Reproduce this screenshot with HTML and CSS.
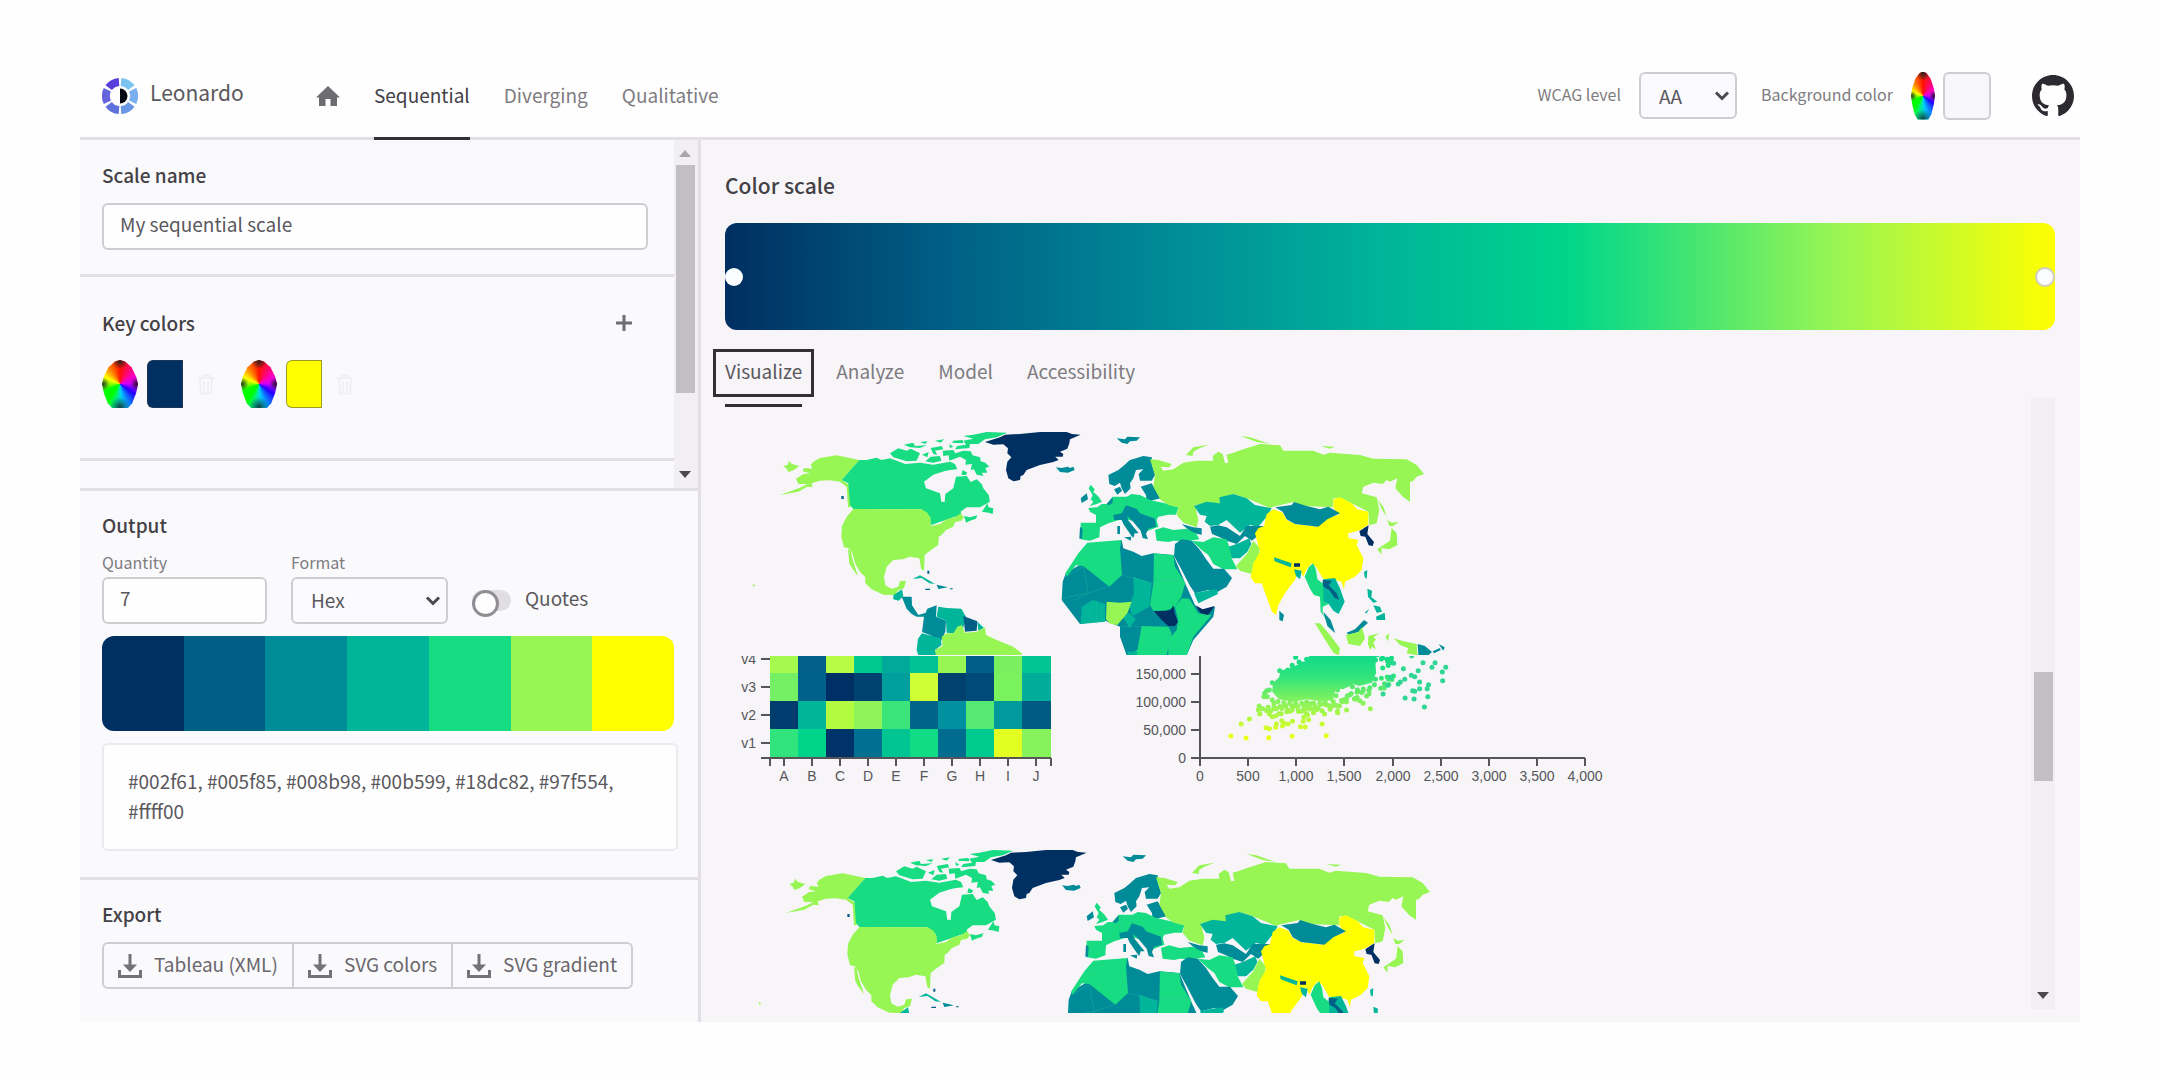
FILE: index.html
```html
<!DOCTYPE html>
<html lang="en">
<head>
<meta charset="utf-8">
<meta name="viewport" content="width=device-width, initial-scale=1">
<title>Leonardo - Sequential</title>
<link rel="stylesheet" href="styles.css">
</head>
<body>
<svg width="0" height="0" class="sprite" aria-hidden="true">
  <symbol id="chevron" viewBox="0 0 16 12"><path d="M2 2.500l6 6 6-6" fill="none" stroke="currentColor" stroke-width="3"/></symbol>
  <symbol id="download" viewBox="0 0 24 24"><path d="M12 0v14M1.500 16v6.500h21V16" fill="none" stroke="currentColor" stroke-width="3"/><path d="M5 10.500h14L12 18z" fill="currentColor"/></symbol>
  <symbol id="trash" viewBox="0 0 18 21"><path d="M1 4h16M6 4V1.500h6V4M3 4l1 15.500h10L15 4M7 7v10M11 7v10" fill="none" stroke="currentColor" stroke-width="2"/></symbol>
</svg>
<div class="app">
  <header class="header">
    <a class="brand" href="#">
      <svg class="logo" viewBox="0 0 36 36" aria-hidden="true">
        <g fill="none" stroke-width="8">
          <path d="M19 4A14 14 0 0 1 29.300 9.700" stroke="#7cc4f0"/>
          <path d="M30.600 11.700A14 14 0 0 1 30.600 24.300" stroke="#7ab0f0"/>
          <path d="M29.300 26.300A14 14 0 0 1 19 32" stroke="#6a96e6"/>
          <path d="M17 32A14 14 0 0 1 6.700 26.300" stroke="#5f72dc"/>
          <path d="M5.400 24.300A14 14 0 0 1 5.400 11.700" stroke="#6465dc"/>
          <path d="M6.700 9.700A14 14 0 0 1 17 4" stroke="#5a3edc"/>
        </g>
        <path d="M18 10.500a7.500 7.500 0 0 1 0 15z" fill="#050510"/>
      </svg>
      <span>Leonardo</span>
    </a>
    <nav class="nav">
      <a class="home" href="#" aria-label="Home"><svg viewBox="0 0 24 20" aria-hidden="true"><path d="M12 0L24 11.500H21V20H14.500V13H9.500V20H3V11.500H0z" fill="#6e6c70"/></svg></a>
      <a class="nav-link active" href="#">Sequential</a>
      <a class="nav-link" href="#">Diverging</a>
      <a class="nav-link" href="#">Qualitative</a>
    </nav>
    <div class="tools">
      <label class="small" for="wcag">WCAG level</label>
      <div class="select wcag"><select id="wcag"><option>AA</option><option>AAA</option></select><svg aria-hidden="true"><use href="#chevron"/></svg></div>
      <label class="small" for="bg">Background color</label>
      <span class="wheel narrow"></span>
      <input class="swatch wide" id="bg" type="color" value="#f8f8fa">
      <a class="github" href="#" aria-label="GitHub"><svg viewBox="0 0 16 16" aria-hidden="true"><path fill="#2c2a30" d="M8 0C3.580 0 0 3.580 0 8c0 3.540 2.290 6.530 5.470 7.590.4.070.55-.17.55-.38 0-.19-.01-.82-.01-1.490-2.010.37-2.530-.49-2.690-.94-.09-.23-.48-.94-.82-1.130-.28-.15-.68-.52-.01-.53.63-.01 1.080.58 1.230.82.72 1.210 1.870.87 2.330.66.070-.52.280-.87.510-1.070-1.780-.2-3.640-.89-3.640-3.950 0-.87.310-1.590.82-2.150-.08-.2-.36-1.020.08-2.120 0 0 .67-.21 2.200.82.64-.18 1.320-.27 2-.27s1.360.09 2 .27c1.530-1.040 2.200-.82 2.200-.82.44 1.100.16 1.920.08 2.120.51.56.82 1.270.82 2.150 0 3.070-1.870 3.750-3.650 3.950.29.25.54.73.54 1.480 0 1.070-.01 1.930-.01 2.200 0 .21.150.46.55.38A8.010 8.010 0 0 0 16 8c0-4.420-3.580-8-8-8z"/></svg></a>
    </div>
  </header>
  <div class="columns">
    <aside class="sidebar">
      <div class="scroll">
        <div class="scroll-body">
          <section class="block name-block">
            <h2><label for="scale-name">Scale name</label></h2>
            <input class="field" id="scale-name" type="text" value="My sequential scale">
          </section>
          <section class="block keys-block">
            <div class="title-row"><h2>Key colors</h2><button class="add" aria-label="Add color"><svg viewBox="0 0 16 16" aria-hidden="true"><path d="M8 0v16M0 8h16" stroke="#6e6c70" stroke-width="3"/></svg></button></div>
            <div class="keys">
              <div class="key"><span class="wheel"></span><input class="swatch" type="color" value="#002f61" aria-label="Key color 1"><button class="remove" aria-label="Remove color 1" disabled><svg aria-hidden="true"><use href="#trash"/></svg></button></div>
              <div class="key"><span class="wheel"></span><input class="swatch" type="color" value="#ffff00" aria-label="Key color 2"><button class="remove" aria-label="Remove color 2" disabled><svg aria-hidden="true"><use href="#trash"/></svg></button></div>
            </div>
          </section>
        </div>
        <div class="bar side-bar"><i class="up"></i><i class="thumb"></i><i class="space"></i><i class="down"></i></div>
      </div>
      <section class="block output-block">
        <h2>Output</h2>
        <div class="options">
          <div class="option qty"><label class="small" for="quantity">Quantity</label><input class="field" id="quantity" type="text" inputmode="numeric" value="7"></div>
          <div class="option fmt"><label class="small" for="format">Format</label><div class="select"><select id="format"><option>Hex</option><option>RGB</option></select><svg aria-hidden="true"><use href="#chevron"/></svg></div></div>
          <label class="quotes"><input type="checkbox" class="toggle"><span>Quotes</span></label>
        </div>
        <div class="ramp"><i class="c1"></i><i class="c2"></i><i class="c3"></i><i class="c4"></i><i class="c5"></i><i class="c6"></i><i class="c7"></i></div>
        <output class="codes" for="quantity format">#002f61, #005f85, #008b98, #00b599, #18dc82, #97f554, #ffff00</output>
      </section>
      <section class="block export-block">
        <h2>Export</h2>
        <div class="group">
          <button><svg aria-hidden="true"><use href="#download"/></svg><span>Tableau (XML)</span></button>
          <button><svg aria-hidden="true"><use href="#download"/></svg><span>SVG colors</span></button>
          <button><svg aria-hidden="true"><use href="#download"/></svg><span>SVG gradient</span></button>
        </div>
      </section>
    </aside>
    <main class="main">
      <h1>Color scale</h1>
      <div class="gradient"><span class="knob"></span><span class="knob end"></span></div>
      <div class="tabs" role="tablist">
        <button class="tab focus" role="tab" aria-selected="true">Visualize</button>
        <button class="tab" role="tab">Analyze</button>
        <button class="tab" role="tab">Model</button>
        <button class="tab" role="tab">Accessibility</button>
      </div>
      <div class="viz">
        <svg class="charts" width="900" height="605" viewBox="725 408 900 605" role="img" aria-label="Choropleth, heatmap and scatterplot samples">
          <defs>
            <clipPath id="top-clip"><rect x="725" y="408" width="900" height="247"/></clipPath>
            <clipPath id="low-clip"><rect x="725" y="656" width="900" height="180"/></clipPath>
            <linearGradient id="dots" gradientUnits="userSpaceOnUse" x1="0" y1="48" x2="0" y2="292"><stop offset="0" stop-color="#10da88"/><stop offset=".25" stop-color="#30e37c"/><stop offset=".6" stop-color="#90f458"/><stop offset="1" stop-color="#ecff1c"/></linearGradient>
            <g id="world">
              <g transform="translate(720 420) scale(.333333)">
                <path class="m6" d="M280 125L300 114 350 106 418 120 365 180 388 195 392 262 384 262 380 200 360 185 330 181 300 182 275 190 278 202 262 200 235 215 180 225 240 203 262 192 235 192 228 176 250 162 270 160 248 154 252 144 278 146 272 135ZM190 138L204 134 206 122 216 132 238 138 222 150 205 156 200 146Z"/>
                <path class="m5" d="M418 120L440 120 470 113 484 120 510 115 540 126 556 132 600 128 640 134 690 125 705 132 712 148 690 150 672 154 640 164 612 185 618 205 660 220 664 245 674 246 676 222 700 205 708 170 740 168 752 186 770 178 785 192 790 205 806 225 810 245 780 262 740 262 722 275 725 285 700 292 632 316 630 290 605 268 400 267 390 255 385 190 365 180ZM732 288L750 292 772 286 768 296 750 302 738 308ZM786 275L802 250 806 262 820 265 818 282 806 278Z"/>
                <path class="m5" d="M510 100L535 85 560 92 572 86 600 100 590 122 560 124 540 118 520 112ZM552 74L580 68 585 78 620 76 600 84 570 82ZM600 66L622 64 616 72ZM645 62L672 58 662 68ZM632 84L665 78 670 88 645 92 652 104 640 102ZM606 104L626 96 622 112ZM632 110L660 108 664 122 640 128 616 124ZM668 92L700 90 706 100 730 92 752 94 758 106 780 112 782 124 796 128 808 140 796 144 802 158 786 158 790 168 770 164 762 148 752 150 756 132 736 134 738 120 720 110 700 118 688 122 686 106 670 108ZM696 68L730 70 728 60 700 62ZM730 48L760 44 800 36 862 38 830 52 795 58 775 72 750 72 748 84 705 88 712 78 738 74 730 62 760 56ZM688 72L700 80 690 84ZM728 150L742 158 736 166 724 164Z"/>
                <path class="m6" d="M400 267L605 268 622 278 632 295 632 318 660 312 680 298 705 292 722 280 732 292 724 302 705 306 700 320 678 330 664 346 656 350 655 375 636 388 614 405 612 452 604 448 598 415 570 410 548 418 520 420 500 440 492 470 496 496 515 506 535 500 540 484 558 482 552 505 535 510 525 525 490 524 455 508 436 490 436 472 420 455 405 430 398 402 388 385 372 382 364 350 366 318 380 290ZM384 385L392 392 398 420 414 468 400 450 388 430Z"/>
                <path class="m1" d="M795 66L840 52 855 44 900 42 960 36 1040 36 1056 42 1082 44 1050 58 1048 70 1042 86 1020 95 1030 102 1028 110 1006 110 1016 120 1000 126 960 135 920 150 910 165 902 168 900 180 880 184 865 175 858 150 862 125 874 112 862 100 864 85 850 73 820 74Z"/>
                <path class="m3" d="M1008 142L1024 144 1044 140 1050 144 1060 140 1064 150 1044 158 1020 156ZM545 530L575 530 576 556 595 585 618 578 612 590 590 590 575 582 560 566ZM612 590L622 566 650 556 648 590 678 602 676 635 662 665 630 645 606 636ZM650 494L684 502 655 507Z"/>
                <path class="m4" d="M578 477L600 466 625 480 645 492 628 490 605 474ZM520 526L546 508 550 528 536 542 520 538ZM655 560L680 564 724 566 738 590 730 622 700 640 680 638 678 602 650 590ZM772 605L792 624 775 632ZM606 640L662 655 665 675 645 690 655 720 600 720 590 690 594 656Z"/>
                <path class="m2" d="M730 588L772 604 770 632 735 635ZM621 438l8 3M622 452h6v9h-6zM616 506h14v4h-14zM690 505h8v3h-8zM364 228h7v9h-7z"/>
                <path class="m6" d="M665 650L680 640 700 640 712 620 725 615 735 638 770 635 795 622 798 645 830 660 880 680 905 700 905 720 650 720 645 690 668 678ZM98 492l8 4-6 4z"/>
              </g>
              <g transform="translate(1040 420) scale(.333333)">
                <path class="m3" d="M230 55L255 58 262 50 300 52 290 62 270 64 262 72 245 68ZM205 165L235 150 250 138 270 120 310 108 335 112 338 142 345 165 335 182 300 182 296 162 310 148 288 150 280 175 270 190 272 205 255 222 245 205 240 188 224 198 208 192ZM222 208L240 200 246 212 232 224ZM302 200L335 190 350 215 362 235 320 245 318 225ZM122 235L140 220 144 238 125 249Z"/>
                <path class="m5" d="M146 205L152 194 164 208 160 216 174 228 186 245 170 252 150 258 160 245 152 238 158 226ZM145 264L172 262 185 252 200 252 218 230 260 230 275 222 300 225 330 240 375 250 415 262 408 284 385 284 355 290 350 300 355 320 330 330 310 338 290 305 250 296 230 302 205 310 180 322 178 352 150 362 122 358 122 308 168 308 168 285 150 275Z"/>
                <path class="m3" d="M200 252l18-20v16l-10 8zM220 285L245 280 258 256 290 266 300 280 345 296 348 320 325 326 318 342 324 358 308 354 302 332 280 306 262 288 264 300 280 320 296 340 284 340 280 354 272 344 250 312 245 300 222 300ZM252 352L274 350 272 362ZM232 318h8v24h-8zM425 312L460 322 485 325 485 344 456 338ZM120 320l8 8-2 28h-8z"/>
                <path class="m5" d="M345 330L370 322 400 330 440 326 470 342 478 358 440 364 400 362 385 366 350 362Z"/>
                <path class="m6" d="M330 118L355 120 395 132 388 142 362 140 370 152 400 148 430 128 470 122 520 122 518 108 535 95 548 102 555 130 565 128 560 104 576 100 610 88 660 72 720 76 730 92 820 92 850 104 870 98 960 105 1000 116 1100 118 1130 135 1152 162 1130 170 1118 184 1110 185 1110 245 1090 232 1066 205 1072 175 1050 185 1040 180 1028 192 1000 188 970 200 965 220 1010 232 1018 270 1010 310 988 316 985 275 935 250 900 234 880 235 878 262 790 258 760 246 700 260 690 264 620 235 580 222 540 235 540 250 465 255 475 300 470 322 430 308 410 285 415 262 385 255 362 240 340 200 345 165ZM438 105L460 82 505 74 475 86 460 95 458 108ZM602 48L630 52 690 72 650 66ZM842 78L885 80 870 86ZM1012 238L1030 260 1040 290 1028 272ZM1042 300L1055 308 1076 306 1060 318 1048 318ZM1055 324L1070 340 1072 375 1048 388 1025 384 1024 404 1012 388 1050 362Z"/>
                <path class="m4" d="M462 258L500 245 540 250 538 232 580 222 620 235 645 255 695 265 680 290 655 320 630 315 600 338 560 300 535 315 510 318 494 305 500 288 480 284ZM565 380L590 372 628 355 634 372 622 395 600 415 575 415Z"/>
                <path class="m3" d="M510 320L535 316 560 322 600 348 620 318 676 318 650 350 636 362 615 348 590 372 560 362 540 352 516 342Z"/>
                <path class="m5" d="M455 362L490 366 520 352 560 358 568 380 575 415 592 448 550 448 520 432 505 405 485 390Z"/>
                <path class="m6" d="M588 438L622 400 640 362 660 385 655 412 640 430 635 462 600 452Z"/>
                <path class="m3" d="M405 372L425 358 455 362 480 390 500 420 520 446 552 446 576 474 560 500 525 520 505 510 465 520 450 498 420 440 402 408Z"/>
                <path class="m4" d="M462 520L500 512 530 508 534 522 475 550Z"/>
                <path class="m7" d="M680 282L700 268 728 278 740 300 765 312 830 320 840 300 895 285 880 262 880 238 900 232 935 250 952 268 985 275 985 315 960 330 945 335 925 340 925 354 955 360 950 375 970 415 965 450 945 470 915 485 912 508 904 485 880 478 850 478 828 440 815 430 800 448 790 470 778 446 765 480 755 492 735 520 715 555 708 585 696 575 665 490 645 490 632 472 640 430 660 395 645 340 655 325 672 318Z"/>
                <path class="m3" d="M706 262L755 255 762 246 800 258 840 268 865 260 900 280 862 298 835 320 765 312 740 298 728 275ZM718 572L732 585 728 604 718 600ZM850 575L872 600 886 640 862 618ZM920 638L945 628 972 600 984 608 966 625 955 636 925 644ZM1133 672L1155 678 1176 696 1165 706 1135 706ZM1178 694L1200 684 1202 690 1182 700ZM1196 672L1214 682 1210 692Z"/>
                <path class="m1" d="M958 334L976 322 986 316 982 342 1002 366 998 378 986 376 976 350 962 348ZM762 430h18v10h-18z"/>
                <path class="m4" d="M702 412L755 430 752 442 704 424ZM762 448L785 452 780 478 768 468ZM850 478L885 474 900 505 914 545 896 582 880 572 866 552 850 545 838 528ZM972 456L982 450 980 476 974 472ZM982 506L996 512 994 532 1012 545 1000 548 984 530ZM1000 556L1020 560 1026 575 1010 578ZM1008 590L1034 578 1036 600 1010 600ZM974 578l14-12-8 14z"/>
                <path class="m5" d="M794 470L806 442 820 430 828 450 832 478 850 492 850 545 866 552 848 560 848 580 862 606 842 575 840 530 822 525 812 510Z"/>
                <path class="m2" d="M848 480L876 482 866 496 890 520 898 540 884 534 868 510 850 500Z"/>
                <path class="m6" d="M825 610L840 610 870 645 900 685 896 706 880 698 858 664ZM918 645L955 636 966 622 975 655 960 678 925 672ZM985 648L1018 640 1000 652 1008 658 1000 668 1008 688 996 680 990 690 984 672ZM1062 655L1085 662 1130 672 1132 706 1100 700 1105 685 1080 675ZM1036 650l12-10-4 24z"/>
                <path class="m3" d="M110 440L245 360 250 385 280 395 305 408 340 400 400 405 440 500 465 555 478 572 525 560 520 590 460 660 440 706 260 706 240 650 240 620 190 600 120 612 65 540 68 485 78 458Z"/>
                <path class="m5" d="M115 400L142 368 244 360 240 385 246 465 208 500 130 438 108 436 80 470 76 460ZM342 400L378 404 400 405 405 440 436 490 424 530 405 560 378 572 340 572 330 555 340 490ZM425 535L448 536 475 580 515 585 460 650 440 706 385 706 385 660 410 630 414 600 405 560ZM305 618L385 620 395 640 380 706 262 706 292 690Z"/>
                <path class="m4" d="M125 560L158 540 195 552 195 605 122 612ZM280 470L335 490 328 560 278 588 268 560 282 520ZM248 590l20-12 20 20-20 26zM262 695h30v12h-26z"/>
                <path class="m6" d="M200 545L240 548 275 545 262 580 232 615 212 612 198 598Z"/>
                <path class="m1" d="M466 556L488 568 524 558 504 585 482 580ZM342 574L378 572 392 570 400 556 404 580 414 605 405 618 385 618 365 600Z"/>
                <path class="lines" d="M78 470L130 440 145 520 66 535M205 500L145 520 105 540M245 465L340 490M342 480H424M150 560V610M170 545V610M185 560V608M385 620V700M225 235L222 280M260 230L262 256M560 300L640 350M120 400L145 395 160 372M430 535L405 565M240 620H300"/>
              </g>
            </g>
          </defs>
          <g clip-path="url(#top-clip)"><use href="#world"/></g>
          <use href="#world" x="6" y="418"/>
          <g clip-path="url(#low-clip)">
            <g class="cells">
              <path d="M770 645h28v29h-28z" fill="#a6fa4d"/><path d="M798 645h28v29h-28z" fill="#006089"/><path d="M826 645h28v29h-28z" fill="#b8fb45"/><path d="M854 645h28v29h-28z" fill="#00c98f"/><path d="M882 645h28v29h-28z" fill="#00a99a"/><path d="M910 645h28v29h-28z" fill="#00c292"/><path d="M938 645h28v29h-28z" fill="#97f554"/><path d="M966 645h28v29h-28z" fill="#005f8a"/><path d="M994 645h28v29h-28z" fill="#7af060"/><path d="M1022 645h29v29h-29z" fill="#00c592"/>
              <path d="M770 673h28v28h-28z" fill="#75f065"/><path d="M798 673h28v28h-28z" fill="#00618b"/><path d="M826 673h28v28h-28z" fill="#002f66"/><path d="M854 673h28v28h-28z" fill="#004270"/><path d="M882 673h28v28h-28z" fill="#009e9c"/><path d="M910 673h28v28h-28z" fill="#cfff35"/><path d="M938 673h28v28h-28z" fill="#00416f"/><path d="M966 673h28v28h-28z" fill="#004a78"/><path d="M994 673h28v28h-28z" fill="#7af25e"/><path d="M1022 673h29v28h-29z" fill="#00ad9a"/>
              <path d="M770 701h28v28h-28z" fill="#003c6d"/><path d="M798 701h28v28h-28z" fill="#00b599"/><path d="M826 701h28v28h-28z" fill="#b2fb40"/><path d="M854 701h28v28h-28z" fill="#8ff45a"/><path d="M882 701h28v28h-28z" fill="#3be57a"/><path d="M910 701h28v28h-28z" fill="#006489"/><path d="M938 701h28v28h-28z" fill="#0090a0"/><path d="M966 701h28v28h-28z" fill="#56ea74"/><path d="M994 701h28v28h-28z" fill="#009a9c"/><path d="M1022 701h29v28h-29z" fill="#005a82"/>
              <path d="M770 729h28v29h-28z" fill="#30e37c"/><path d="M798 729h28v29h-28z" fill="#00d48b"/><path d="M826 729h28v29h-28z" fill="#003468"/><path d="M854 729h28v29h-28z" fill="#007092"/><path d="M882 729h28v29h-28z" fill="#00c592"/><path d="M910 729h28v29h-28z" fill="#10dc85"/><path d="M938 729h28v29h-28z" fill="#006c90"/><path d="M966 729h28v29h-28z" fill="#00cb8e"/><path d="M994 729h28v29h-28z" fill="#e3ff22"/><path d="M1022 729h29v29h-29z" fill="#86f25c"/>
            </g>
            <path class="axis" d="M761 758H1051M770 758v8M784 758v8M812 758v8M840 758v8M868 758v8M896 758v8M924 758v8M952 758v8M980 758v8M1008 758v8M1036 758v8M1051 758v8M761 743h9M761 715h9M761 687h9M761 659h9"/>
            <g class="ticks end"><text x="756" y="664">v4</text><text x="756" y="692">v3</text><text x="756" y="720">v2</text><text x="756" y="748">v1</text></g>
            <g class="ticks mid"><text x="784" y="781">A</text><text x="812" y="781">B</text><text x="840" y="781">C</text><text x="868" y="781">D</text><text x="896" y="781">E</text><text x="924" y="781">F</text><text x="952" y="781">G</text><text x="980" y="781">H</text><text x="1008" y="781">I</text><text x="1036" y="781">J</text></g>
            <g transform="translate(1100 640) scale(.344353 .333333)">
              <path d="M612 40L600 62 560 80 525 92 520 112 502 130 500 155 520 178 560 186 600 178 640 184 676 180 684 150 720 142 735 132 752 138 790 128 802 98 800 75 804 40Z" fill="url(#dots)"/>
              <g class="dots" stroke="url(#dots)">
                <path d="M380 288h.1M424 294h.1M490 293h.1M558 289h.1M657 287h.1M410 252h.1M434 237h.1M482 263h.1M492 266h.1M512 252h.1M510 262h.1M528 242h.1M534 250h.1M546 252h.1M530 258h.1M559 244h.1M582 260h.1M596 261h.1M590 244h.1M606 239h.1M592 232h.1M645 252h.1M652 222h.1M690 218h.1M716 210h.1M668 208h.1M785 206h.1M764 190h.1M754 182h.1M740 178h.1M620 218h.1M645 212h.1M634 206h.1M462 198h.1M460 210h.1M464 222h.1M472 206h.1M484 212h.1M492 222h.1M500 230h.1M488 202h.1M496 212h.1M508 206h.1M478 160h.1M484 152h.1M486 170h.1M476 170h.1M492 150h.1M500 128h.1M522 92h.1M545 90h.1M558 76h.1M568 52h.1M578 66h.1M590 72h.1M600 58h.1"/>
                <path class="run" d="M505 190L520 222 535 192 550 220 565 190 580 222 600 184 600 232 615 190 625 215 645 186 660 200 680 182 690 214 704 172 715 190 720 158 745 182 750 150 780 172 784 140 806 130M510 228L560 208 610 216M505 200L560 198 620 204 640 192 690 200 730 160 785 150M500 180L540 190 640 190 700 160"/>
                <path class="run" d="M690 150L720 130 745 150 770 146M800 60L830 55 850 70 826 82 806 90M815 145L835 120 855 106 835 140 820 146M800 118L850 108M806 44L838 66 850 50"/>
              </g>
              <path class="dots far" d="M881 86h.1M924 92h.1M938 68h.1M973 68h.1M964 82h.1M1004 82h.1M994 96h.1M995 122h.1M905 48h.1M904 106h.1M914 110h.1M885 118h.1M866 132h.1M872 126h.1M928 126h.1M954 134h.1M928 146h.1M950 146h.1M908 152h.1M914 154h.1M886 174h.1M912 177h.1M952 170h.1M942 201h.1M822 162h.1M836 136h.1M844 112h.1M853 70h.1"/>
            </g>
            <path class="axis" d="M1200 650V758H1585M1200 758v8M1248 758v8M1296 758v8M1344 758v8M1393 758v8M1441 758v8M1489 758v8M1537 758v8M1585 758v8M1191 758h9M1191 730h9M1191 702h9M1191 674h9"/>
            <g class="ticks end"><text x="1186" y="679">150,000</text><text x="1186" y="707">100,000</text><text x="1186" y="735">50,000</text><text x="1186" y="763">0</text></g>
            <g class="ticks mid"><text x="1200" y="781">0</text><text x="1248" y="781">500</text><text x="1296" y="781">1,000</text><text x="1344" y="781">1,500</text><text x="1393" y="781">2,000</text><text x="1441" y="781">2,500</text><text x="1489" y="781">3,000</text><text x="1537" y="781">3,500</text><text x="1585" y="781">4,000</text></g>
          </g>
        </svg>
        <div class="bar main-bar"><i class="space"></i><i class="thumb"></i><i class="space low"></i><i class="down"></i></div>
      </div>
    </main>
  </div>
</div>
</body>
</html>
```
FILE: styles.css
```css
* { box-sizing: border-box; }
body { margin: 0; background: #fefefe; color: #5a585d; font: 19px/24px "Noto Sans CJK SC", "Noto Sans", sans-serif; }
h1, h2 { margin: 0; color: #434146; font-weight: 500; }
h1 { font-size: 21px; line-height: 28px; }
h2 { font-size: 19px; line-height: 24px; }
a { color: inherit; text-decoration: none; }
button, input, select { font: inherit; color: inherit; margin: 0; }
button { background: none; border: 0; padding: 0; }
svg { display: block; }
.sprite { position: absolute; }
.app { margin: 54px 80px; }
.small { font-size: 16px; line-height: 20px; color: #7e7c81; }

.header { display: flex; align-items: stretch; height: 86px; border-bottom: 3px solid #e2e0e4; padding: 0 6px 0 22px; }
.brand { display: flex; align-items: center; gap: 12px; width: 214px; font-size: 21px; }
.brand span { padding-bottom: 8px; }
.logo { width: 36px; height: 36px; }
.nav { display: flex; gap: 34px; }
.nav-link { display: flex; align-items: center; color: #7e7c81; height: 86px; padding-bottom: 2px; border-bottom: 3px solid transparent; }
.nav-link.active { color: #434146; border-color: #323036; }
.home { display: flex; align-items: center; }
.home svg { width: 24px; height: 20px; }
.tools { display: flex; align-items: center; margin-left: auto; }
.tools .small { padding-bottom: 4px; }
.select { position: relative; height: 47px; }
.select select { appearance: none; width: 100%; height: 100%; padding: 0 18px 2px; border: 2px solid #cfcdd2; border-radius: 6px; background: #fbfafd; }
.select svg { position: absolute; right: 7px; top: 18px; width: 16px; height: 12px; pointer-events: none; color: #4b494e; }
.wcag { width: 98px; margin: 0 24px 0 18px; }
.wcag select { padding-bottom: 0; }
.wheel { width: 36px; height: 48px; clip-path: polygon(50% 0, 64% 3%, 82% 15%, 95% 35%, 100% 50%, 95% 68%, 84% 90%, 72% 100%, 28% 100%, 16% 90%, 5% 68%, 0 50%, 5% 35%, 18% 15%, 36% 3%); background: radial-gradient(circle at 50% 2%, #222 0, transparent 16%), radial-gradient(circle at 50% 98%, #144 0, transparent 20%), radial-gradient(circle at 2% 50%, #232 0, transparent 16%), radial-gradient(circle at 98% 50%, #212 0, transparent 16%), conic-gradient(#f10, #f0a 50deg, #c0f 90deg, #20f 125deg, #0cf 172deg, #0e9 190deg, #0f0 215deg, #0f0 245deg, #9f0 272deg, #ff0 295deg, #f80 325deg, #f10); }
.wheel.narrow { width: 24px; margin: 0 8px 0 18px; }
.swatch { appearance: none; width: 36px; height: 48px; padding: 0; border: 0; background: none; }
.swatch::-webkit-color-swatch-wrapper { padding: 0; }
.swatch::-webkit-color-swatch { border: 1px solid rgba(60, 60, 70, .5); border-radius: 6px 0 0 6px; }
.swatch.wide { width: 48px; }
.swatch.wide::-webkit-color-swatch { border: 2px solid #cfcdd2; border-radius: 6px; }
.github { margin-left: 41px; }
.github svg { width: 42px; height: 42px; }

.columns { display: grid; grid-template-columns: 621px minmax(0, 1fr); }
.sidebar { border-right: 3px solid #e2e0e4; background: #faf9fc; }
.scroll { display: flex; height: 351px; border-bottom: 3px solid #e2e0e4; }
.scroll-body { flex: 1; }
.block { padding: 22px; }
.scroll-body .block { border-bottom: 3px solid #e2e0e4; }
.field { display: block; width: 100%; height: 47px; padding: 0 16px 7px; border: 2px solid #cfcdd2; border-radius: 6px; background: #fefefe; }
.scroll-body .name-block { padding: 23px 26px 24px 22px; }
.name-block h2 { margin-bottom: 16px; }
.scroll-body .keys-block { padding: 34px 42px 50px 22px; }
.title-row { display: flex; justify-content: space-between; align-items: center; margin-bottom: 25px; }
.add svg { width: 16px; height: 16px; }
.keys { display: flex; gap: 22px; }
.key { display: flex; gap: 9px; }
.remove { width: 27px; height: 48px; color: #f1eff3; display: flex; justify-content: center; align-items: center; }
.remove svg { width: 18px; height: 21px; }

.bar { display: flex; flex-direction: column; align-items: center; background: #f1eff2; }
.side-bar { width: 24px; padding: 10px 2px 10px 0; }
.main-bar { width: 24px; padding: 0 0 10px; }
.bar .thumb { width: 19px; background: #c1bfc2; }
.side-bar .thumb { height: 228px; margin-top: 8px; }
.main-bar .thumb { height: 109px; }
.bar .space { flex: 1; }
.bar .low { flex: none; height: 211px; }
.up, .down { border: 6px solid transparent; }
.up { border-top: 0; border-bottom: 7px solid #a8a6aa; }
.down { border-bottom: 0; border-top: 7px solid #4b494e; }

.output-block { border-bottom: 3px solid #e2e0e4; padding: 22px 20px 26px 22px; }
.options { display: flex; align-items: flex-end; margin: 15px 0 12px; }
.option { display: grid; gap: 5px; }
.qty { width: 165px; margin-right: 24px; }
.fmt { width: 157px; margin-right: 24px; }
.quotes { display: flex; align-items: center; gap: 14px; height: 47px; }
.quotes span { padding-bottom: 6px; }
.toggle { appearance: none; width: 39px; height: 21px; border-radius: 11px; background: #e0dee2; }
.toggle::before { content: ""; display: block; width: 21px; height: 21px; border: 3px solid #908e93; border-radius: 50%; background: #fefefe; }
.ramp { display: flex; height: 95px; width: 572px; border-radius: 12px; overflow: hidden; margin-bottom: 12px; }
.ramp i { flex: 1; }
.c1 { background: #002f61; } .c2 { background: #005f85; } .c3 { background: #008b98; } .c4 { background: #00b599; } .c5 { background: #18dc82; } .c6 { background: #97f554; } .c7 { background: #ffff00; }
.codes { display: block; height: 108px; padding: 21px 24px; line-height: 30px; border: 2px solid #eceaee; border-radius: 6px; background: #fefefe; }
.export-block { padding-bottom: 33px; }
.group { display: flex; margin-top: 16px; width: max-content; border: 2px solid #cfcdd2; border-radius: 6px; }
.group button { display: flex; align-items: center; gap: 12px; height: 43px; padding: 0 14px; color: #69676c; }
.group button + button { border-left: 2px solid #cfcdd2; }
.group span { padding-bottom: 4px; }
.group svg { width: 24px; height: 24px; color: #747277; }

.main { padding: 31px 25px 0 24px; background: #f7f5f8; }
.gradient { display: flex; justify-content: space-between; align-items: center; height: 107px; margin: 24px 0 29px; border-radius: 12px; background: linear-gradient(90deg, #002f61, #005f85 16.670%, #008b98 33.330%, #00b599 50%, #00d48b 63%, #18dc82 67%, #97f554 83.330%, #ffff00); }
.knob { width: 18px; height: 18px; border-radius: 50%; background: #fbfdff; }
.knob.end { width: 20px; height: 20px; border: 2px solid #cfcdc0; }
.tabs { display: flex; gap: 34px; color: #7e7c81; }
.tab { position: relative; height: 24px; }
.focus { color: #5a585d; }
.focus::before { content: ""; position: absolute; inset: -10px -12px -14px; border: 3px solid #323036; }
.focus::after { content: ""; position: absolute; left: 0; right: 0; bottom: -24px; height: 3px; background: #323036; }
.viz { display: flex; justify-content: space-between; align-items: flex-start; margin-top: 15px; height: 624px; }
.charts { flex: none; margin-top: 10px; }
.main-bar { height: 611px; }
.m1 { fill: #002f61; } .m2 { fill: #005f85; } .m3 { fill: #008b98; } .m4 { fill: #00b599; } .m5 { fill: #18dc82; } .m6 { fill: #97f554; } .m7 { fill: #ffff00; }
.lines { fill: none; stroke: #2cc0a0; stroke-width: 1; }
.cells { shape-rendering: crispEdges; }
.axis { fill: none; stroke: #56565a; stroke-width: 2; }
.ticks { font: 14px "Liberation Sans", Arial, sans-serif; fill: #56565a; }
.end { text-anchor: end; }
.mid { text-anchor: middle; }
.dots { fill: none; }
.dots path, .dots.far { stroke-width: 5px; stroke-linecap: round; vector-effect: non-scaling-stroke; }
.dots .run { stroke-dasharray: 0 6; }
.far { stroke: #30d694; }
```
